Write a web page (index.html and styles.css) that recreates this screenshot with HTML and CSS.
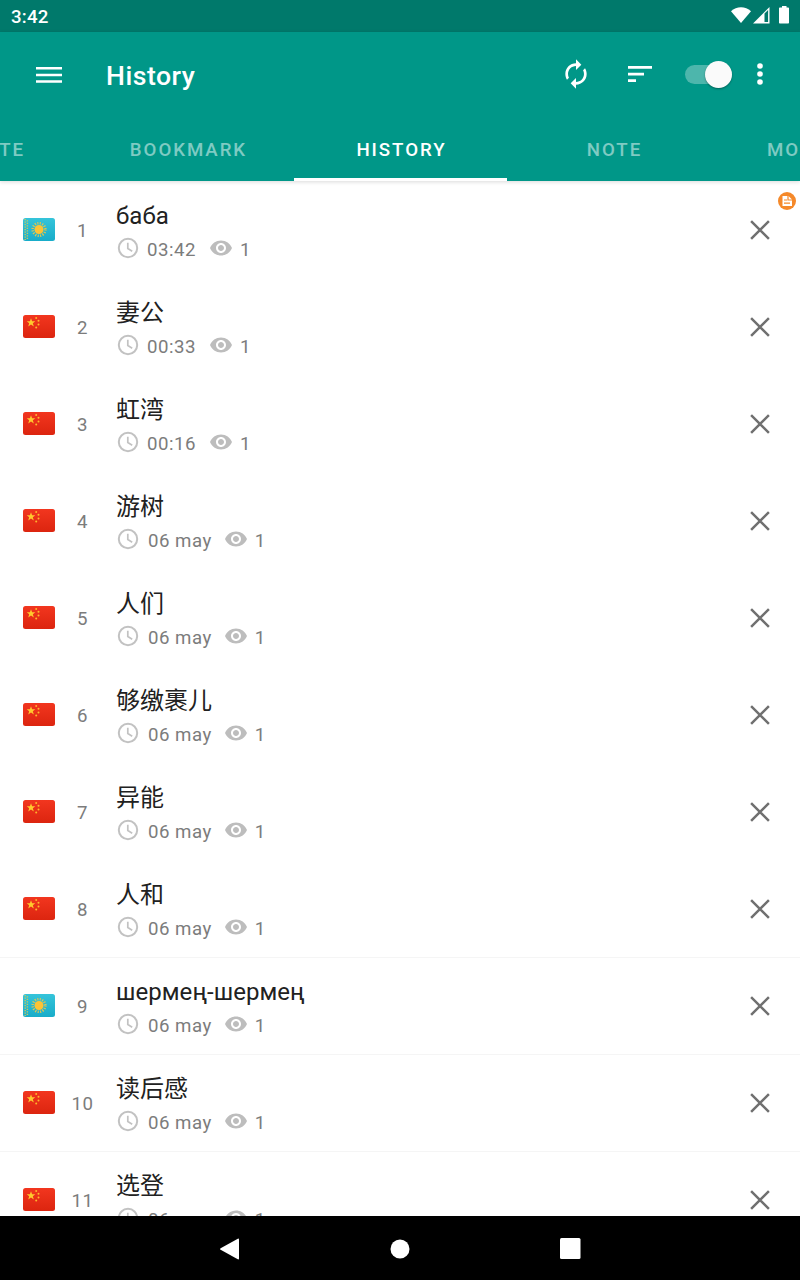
FILE: index.html
```html
<!DOCTYPE html>
<html lang="en">
<head>
    <meta charset="UTF-8">
    <meta name="viewport" content="width=device-width, initial-scale=1.0">
    <title>History</title>
    <link rel="stylesheet" href="styles.css">
</head>
<body>

    <!-- Shared icons -->
    <svg class="sprite" width="0" height="0">
        <defs>
            <linearGradient id="sky" x1="0" y1="0" x2="0" y2="1">
                <stop offset="0" stop-color="#35c4da"/>
                <stop offset="1" stop-color="#18acc9"/>
            </linearGradient>
            <linearGradient id="red" x1="0" y1="0" x2="0" y2="1">
                <stop offset="0" stop-color="#f2361f"/>
                <stop offset="1" stop-color="#dc250f"/>
            </linearGradient>
        </defs>
        <symbol id="flag-kz" viewBox="0 0 32 23">
            <rect width="32" height="23" rx="2.5" fill="url(#sky)"/>
            <path d="M2.2 1v21M4.4 2.2v20" stroke="#c8c95c" stroke-width="1.4" stroke-dasharray="1.3 1.2"/>
            <circle cx="16" cy="11.5" r="6.3" fill="none" stroke="#dcc653" stroke-width="2.6" stroke-dasharray="1.1 1.374"/>
            <circle cx="16" cy="11.5" r="4.5" fill="#fdc335"/>
        </symbol>
        <symbol id="flag-cn" viewBox="0 0 32 23">
            <rect width="32" height="23" rx="2.5" fill="url(#red)"/>
            <path d="M8 3.3l1.1 3h3.2L9.8 8.2l1 3.2L8 9.5l-2.8 1.900 1-3.200-2.500-1.900h3.200z" fill="#ffc92e"/>
            <g fill="#ffb52c">
                <circle cx="13.2" cy="2.9" r="1"/>
                <circle cx="15.5" cy="5.7" r="1"/>
                <circle cx="15.5" cy="9.6" r="1"/>
                <circle cx="13.2" cy="12.4" r="1"/>
            </g>
        </symbol>
        <symbol id="clock" viewBox="0 0 24 24">
            <circle cx="12" cy="12" r="9.200" fill="none" stroke="#c2c2c2" stroke-width="2"/>
            <path d="M11.800 6.800v5.700l4.400 2.700" fill="none" stroke="#c2c2c2" stroke-width="1.700"/>
        </symbol>
        <symbol id="eye" viewBox="0 0 24 24">
            <path d="M12 4.5C7 4.5 2.73 7.61 1 12c1.73 4.39 6 7.5 11 7.5s9.27-3.11 11-7.5c-1.73-4.39-6-7.5-11-7.5zM12 17c-2.76 0-5-2.24-5-5s2.24-5 5-5 5 2.24 5 5-2.24 5-5 5zm0-8c-1.66 0-3 1.34-3 3s1.34 3 3 3 3-1.34 3-3-1.34-3-3-3z"/>
        </symbol>
        <symbol id="close" viewBox="0 0 20 20">
            <path d="M1.1 1.1l17.8 17.8M18.9 1.1L1.1 18.9" fill="none" stroke="#707070" stroke-width="2.5"/>
        </symbol>
    </svg>

    <div class="screen">
        <div class="status-bar">
            <span>3:42</span>
            <svg width="60" height="20" viewBox="0 0 60 20" fill="#fff">
                <path d="M1 6.300C6.500 1 15.500 1 21 6.300L11 18z"/>
                <path d="M23 18.500L39.500 2v16.500z"/>
                <path d="M34.500 8.500v8.600h3.600V5z" fill="#00796b"/>
                <path d="M52 2.500V1h4.500v1.500h1.700q.8 0 .8.800v14.400q0 .8-.8.800h-8.400q-.8 0-.8-.8V3.300q0-.8.800-.8z"/>
            </svg>
        </div>

        <header class="app-bar">
            <div class="toolbar">
                <button class="icon-btn menu-btn">
                    <svg width="26" height="18" viewBox="0 0 26 18" fill="#fff">
                        <path d="M0 1h26v2.500H0zM0 7.700h26v2.500H0zM0 14.300h26v2.500H0z"/>
                    </svg>
                </button>
                <h1 class="title">History</h1>
                <button class="icon-btn sync-btn">
                    <svg width="32" height="32" viewBox="0 0 24 24" fill="#fff">
                        <path d="M12 6v3l4-4-4-4v3c-4.420 0-8 3.580-8 8 0 1.570.46 3.030 1.240 4.260L6.700 14.800c-.45-.83-.7-1.790-.7-2.800 0-3.310 2.690-6 6-6zm6.760 1.740L17.300 9.200c.44.84.7 1.790.7 2.800 0 3.310-2.690 6-6 6v-3l-4 4 4 4v-3c4.420 0 8-3.580 8-8 0-1.570-.46-3.030-1.240-4.260z"/>
                    </svg>
                </button>
                <button class="icon-btn sort-btn">
                    <svg width="26" height="18" viewBox="0 0 26 18" fill="#fff">
                        <path d="M1 1h24v2.700H1zM1 7.700h16v2.700H1zM1 14.300h8V17H1z"/>
                    </svg>
                </button>
                <div class="switch"><div class="thumb"></div></div>
                <button class="icon-btn more-btn">
                    <svg width="8" height="24" viewBox="0 0 8 24" fill="#fff">
                        <circle cx="4" cy="4" r="2.800"/>
                        <circle cx="4" cy="12" r="2.800"/>
                        <circle cx="4" cy="20" r="2.800"/>
                    </svg>
                </button>
            </div>
            <nav class="tabs">
                <a class="tab tab-first">TE</a>
                <a class="tab">BOOKMARK</a>
                <a class="tab active">HISTORY</a>
                <a class="tab">NOTE</a>
                <a class="tab tab-last">MO</a>
            </nav>
        </header>

        <main class="content">
            <div class="list" id="list"></div>
            <div class="badge">
                <svg width="18" height="18" viewBox="0 0 18 18">
                    <circle cx="9" cy="9" r="9" fill="#f5892a"/>
                    <path d="M4.500 4h6l3.500 3.500V14H4.500z" fill="#fff"/>
                    <path d="M10 4v4h4M6 8h3M6 11.200h6" fill="none" stroke="#f5892a" stroke-width="1.200"/>
                </svg>
            </div>
        </main>

        <footer class="nav-bar">
            <svg width="20" height="22" viewBox="0 0 20 22" fill="#fff"><path d="M.6 10.200L17.800.7q1.200-.5 1.200.8v19q0 1.300-1.200.8L.6 11.800q-1.100-.8 0-1.600z"/></svg>
            <svg width="20" height="20" viewBox="0 0 20 20" fill="#fff"><circle cx="10" cy="10" r="9.500"/></svg>
            <svg width="21" height="21" viewBox="0 0 21 21" fill="#fff"><rect width="20.500" height="21" rx="1.500"/></svg>
        </footer>
    </div>

    <script>
        const items = [
            ["kz", "баба", "03:42"],
            ["cn", "妻公", "00:33"],
            ["cn", "虹湾", "00:16"],
            ["cn", "游树", "06 may"],
            ["cn", "人们", "06 may"],
            ["cn", "够缴裹儿", "06 may"],
            ["cn", "异能", "06 may"],
            ["cn", "人和", "06 may"],
            ["kz", "шермең-шермең", "06 may"],
            ["cn", "读后感", "06 may"],
            ["cn", "选登", "06 may"]
        ];

        document.getElementById("list").innerHTML = items.map(function([flag, word, time], i) {
            return `
            <div class="row ${i > 6 ? "divided" : ""}">
                <svg class="flag" width="32" height="23"><use href="#flag-${flag}"/></svg>
                <span class="number">${i + 1}</span>
                <div class="entry">
                    <div class="word ${flag === "cn" ? "word-cn" : ""}">${word}</div>
                    <div class="meta">
                        <svg class="clock" width="24" height="24"><use href="#clock"/></svg>
                        <span class="time ${time.includes("may") ? "date" : ""}">${time}</span>
                        <svg class="eye" width="24" height="24"><use href="#eye"/></svg>
                        <span>1</span>
                    </div>
                </div>
                <svg class="remove" width="20" height="20"><use href="#close"/></svg>
            </div>`;
        }).join("");
    </script>

</body>
</html>
```

FILE: styles.css
```css
* {
    box-sizing: border-box;
}

body {
    margin: 0;
    background: #fff;
    font-family: Roboto, "Noto Sans CJK SC", sans-serif;
}

.sprite {
    position: absolute;
}

.screen {
    display: flex;
    flex-direction: column;
    width: 800px;
    height: 1280px;
    overflow: hidden;
}

/* Status bar */
.status-bar {
    display: flex;
    justify-content: space-between;
    align-items: center;
    flex: none;
    height: 32px;
    padding: 0 10px 0 11px;
    background: #00796b;
    color: #fff;
    font-size: 18.67px;
    font-weight: 500;
    letter-spacing: 0.2px;
}

.status-bar span {
    padding-top: 1px;
}

.status-bar svg {
    margin-bottom: 3px;
}

/* App bar */
.app-bar {
    flex: none;
    height: 149px;
    background: #009788;
    box-shadow: 0 1px 4px rgba(0, 0, 0, 0.15);
    z-index: 1;
}

.toolbar {
    display: flex;
    align-items: center;
    height: 85px;
    padding: 0 36px;
}

.icon-btn {
    display: flex;
    padding: 0;
    border: none;
    background: none;
}

.title {
    flex: 1;
    margin: 2px 0 0 44px;
    color: #fff;
    font-size: 26.67px;
    font-weight: 500;
    letter-spacing: 0.5px;
}

.sync-btn,
.sort-btn,
.more-btn {
    margin-bottom: 1px;
}

.sort-btn {
    margin-left: 35px;
}

.switch {
    display: flex;
    align-items: center;
    justify-content: flex-end;
    width: 47px;
    height: 19px;
    margin-left: 32px;
    border-radius: 10px;
    background: #4db6ac;
}

.thumb {
    flex: none;
    width: 27px;
    height: 27px;
    border-radius: 50%;
    background: #fafafa;
    box-shadow: 0 1px 2px rgba(0, 0, 0, 0.35);
}

.more-btn {
    margin-left: 24px;
}

.tabs {
    display: flex;
    height: 64px;
    margin-left: -132px;
    overflow: hidden;
}

.tab {
    display: flex;
    align-items: center;
    justify-content: center;
    flex: none;
    width: 213px;
    padding-top: 5px;
    padding-left: 2px;
    border-bottom: 3px solid transparent;
    color: rgba(255, 255, 255, 0.5);
    font-size: 18.67px;
    font-weight: 500;
    letter-spacing: 1.95px;
}

.tab.active {
    border-color: #fff;
    color: #fff;
}

.tab-first {
    justify-content: flex-end;
    padding-right: 56px;
}

.tab-last {
    justify-content: flex-start;
    padding-left: 47px;
}

/* History list */
.content {
    position: relative;
    flex: 1;
    min-height: 0;
    padding-top: 1px;
    overflow: hidden;
}

.row {
    display: flex;
    align-items: center;
    height: 97px;
    padding: 0 30px 0 23px;
    border-bottom: 1px solid transparent;
}

.row.divided {
    border-color: #f5f5f5;
}

.flag {
    margin-bottom: 1px;
}

.number {
    width: 55px;
    padding-top: 2px;
    color: #7c7c7c;
    font-size: 18.67px;
    letter-spacing: 0.4px;
    text-align: center;
}

.entry {
    flex: 1;
    padding-left: 6px;
}

.word {
    height: 36px;
    color: #212121;
    font-size: 24px;
    line-height: 37px;
    letter-spacing: 0.05px;
}

.word-cn {
    line-height: 36px;
    letter-spacing: 0;
}

.meta {
    display: flex;
    align-items: center;
    height: 28px;
    color: #7c7c7c;
    font-size: 18.67px;
    letter-spacing: 0.5px;
}

.meta span {
    padding-top: 4px;
}

.meta svg {
    fill: #bdbdbd;
}

.time {
    margin: 0 13px 0 7px;
}

.date {
    margin-left: 8px;
    margin-right: 12px;
}

.eye {
    margin-right: 7px;
}

.badge {
    position: absolute;
    top: 11px;
    right: 4px;
    height: 18px;
}

/* System navigation */
.nav-bar {
    display: flex;
    align-items: center;
    justify-content: space-between;
    flex: none;
    height: 64px;
    padding: 1px 219px 0 220px;
    background: #000;
}
```
